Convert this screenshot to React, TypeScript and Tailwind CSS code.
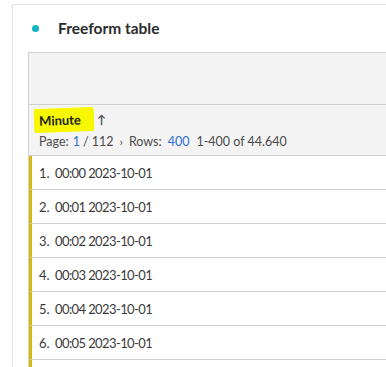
const rows = ["00:00", "00:01", "00:02", "00:03", "00:04", "00:05"];

export default function App() {
  return (
    <div
      className="h-[367px] w-[386px] overflow-hidden bg-white pl-[12px] pt-[4px] text-[#2c2c2c]"
      style={{ fontFamily: "Lato, 'Open Sans', sans-serif" }}
    >
      <div className="h-full border-l border-t border-[#e3e3e3]">
        <div className="flex h-[47px] items-center">
          <span className="ml-[19px] h-[7px] w-[7px] rounded-full bg-[#12b5c4]" />
          <span className="ml-[19px] text-[15.5px] font-bold text-[#2c2c2c]">Freeform table</span>
        </div>
        <div className="ml-[15px] border-l border-t border-[#d3d3d3]">
          <div className="h-[51px] bg-[#f4f4f4]" />
          <div className="h-[52px] border-t border-b border-[#d0d0d0] bg-[#f4f4f4] pl-[10px]">
            <div className="flex h-[27px] items-end">
              <span className="-ml-[5px] inline-block -rotate-2 rounded-[2px] bg-[#f7f700] py-[4px] pl-[5px] pr-[13px] text-[13px] font-bold leading-[16px] text-[#222]">
                Minute
              </span>
              <span className="mb-[3px] ml-[3px] text-[12px] font-bold text-[#555]">↑</span>
            </div>
            <div className="mt-[1px] flex items-center text-[12.5px] text-[#4b4b4b]">
              <span>Page:</span>
              <span className="ml-[4px] text-[#2d6fcf]">1</span>
              <span className="ml-[3px]">/ 112</span>
              <span className="ml-[6px] text-[12px]">›</span>
              <span className="ml-[6px]">Rows:</span>
              <span className="ml-[6px] text-[#2d6fcf]">400</span>
              <span className="ml-[7px]">1-400 of 44.640</span>
            </div>
          </div>
          {rows.map((t, i) => (
            <div
              key={t}
              className="flex h-[34px] items-center border-b border-l-[3px] border-b-[#d0d0d0] border-l-[#d8b70f] bg-white pl-[7px] pt-[3px] text-[13px] text-[#3a3a3a]"
            >
              <span className="w-[16px]">{i + 1}.</span>
              <span className="tracking-[-0.6px]">{t} 2023-10-01</span>
            </div>
          ))}
          <div className="h-[34px] border-l-[3px] border-l-[#d8b70f] bg-white" />
        </div>
      </div>
    </div>
  );
}
